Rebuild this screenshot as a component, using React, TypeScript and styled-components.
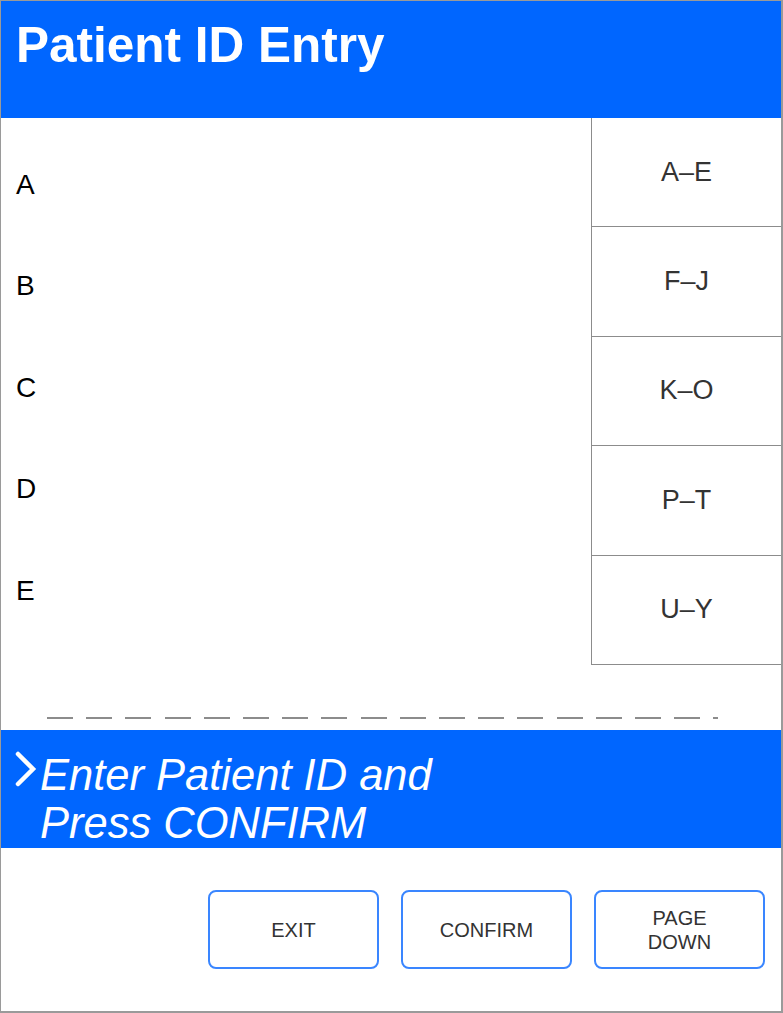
import React from 'react';
import styled, { createGlobalStyle } from 'styled-components';

const GlobalStyle = createGlobalStyle`
    html, body {
        margin: 0;
        padding: 0;
        background: #ffffff;
    }
    * {
        box-sizing: border-box;
    }
`;

const BLUE = '#0066ff';
const GRID = '#8c8c8c';

const Frame = styled.div`
    display: flex;
    flex-direction: column;
    width: 783px;
    height: 1013px;
    border: 1px solid #9a9a9a;
    border-right-width: 2px;
    border-bottom-width: 2px;
    background: #ffffff;
    font-family: 'Liberation Sans', Arial, sans-serif;
    overflow: hidden;
`;

const Header = styled.header`
    height: 117px;
    padding: 15px 0 0 15px;
    background: ${BLUE};
`;

const Title = styled.h1`
    margin: 0;
    font-size: 49.5px;
    line-height: 58px;
    font-weight: 700;
    color: #ffffff;
`;

const Main = styled.div`
    display: flex;
    height: 599px;
`;

const LetterList = styled.ul`
    flex: 1;
    margin: 0;
    padding: 16px 0 0 15px;
    list-style: none;
`;

const LetterRow = styled.li`
    display: flex;
    align-items: center;
    height: 101.5px;
    font-size: 28px;
    color: #000000;
`;

const Keypad = styled.div`
    display: flex;
    flex-direction: column;
    width: 190px;
    align-self: flex-start;
    border-left: 1px solid ${GRID};
`;

const KeyCell = styled.div`
    display: flex;
    align-items: center;
    justify-content: center;
    height: 109.4px;
    border-bottom: 1px solid ${GRID};
    font-size: 27px;
    color: #333333;
`;

const Divider = styled.div`
    height: 2px;
    margin: 0 63px 11px 46px;
    background: repeating-linear-gradient(to right, ${GRID} 0 26px, transparent 26px 39.2px);
`;

const Prompt = styled.div`
    display: flex;
    height: 118px;
    padding: 21px 0 0 14px;
    background: ${BLUE};
    color: #ffffff;
`;

const Chevron = styled.svg`
    flex: none;
    width: 22px;
    height: 36px;
    margin-right: 3px;
`;

const PromptText = styled.p`
    margin: 0;
    font-size: 43.5px;
    line-height: 48px;
    font-style: italic;
`;

const Footer = styled.footer`
    display: flex;
    justify-content: flex-end;
    gap: 22px;
    padding: 42px 16px 0 0;
`;

const ActionButton = styled.button`
    display: flex;
    align-items: center;
    justify-content: center;
    width: 171px;
    height: 79px;
    padding: 0;
    border: 2px solid #3a86ff;
    border-radius: 8px;
    background: #ffffff;
    font-family: 'Liberation Sans', Arial, sans-serif;
    font-size: 20px;
    line-height: 24px;
    color: #333333;
    text-align: center;
`;

const letters = ['A', 'B', 'C', 'D', 'E'];
const ranges = ['A–E', 'F–J', 'K–O', 'P–T', 'U–Y'];

export default function App() {
    return (
        <>
            <GlobalStyle />
            <Frame>
                <Header>
                    <Title>Patient ID Entry</Title>
                </Header>
                <Main>
                    <LetterList>
                        {letters.map(l => (
                            <LetterRow key={l}>{l}</LetterRow>
                        ))}
                    </LetterList>
                    <Keypad>
                        {ranges.map(r => (
                            <KeyCell key={r}>{r}</KeyCell>
                        ))}
                    </Keypad>
                </Main>
                <Divider />
                <Prompt>
                    <Chevron viewBox="0 0 22 36">
                        <polyline
                            points="3,3 18,18 3,33"
                            fill="none"
                            stroke="#ffffff"
                            strokeWidth="4.5"
                            strokeLinecap="round"
                            strokeLinejoin="miter"
                        />
                    </Chevron>
                    <PromptText>
                        Enter Patient ID and
                        <br />
                        Press CONFIRM
                    </PromptText>
                </Prompt>
                <Footer>
                    <ActionButton>EXIT</ActionButton>
                    <ActionButton>CONFIRM</ActionButton>
                    <ActionButton>
                        PAGE
                        <br />
                        DOWN
                    </ActionButton>
                </Footer>
            </Frame>
        </>
    );
}
